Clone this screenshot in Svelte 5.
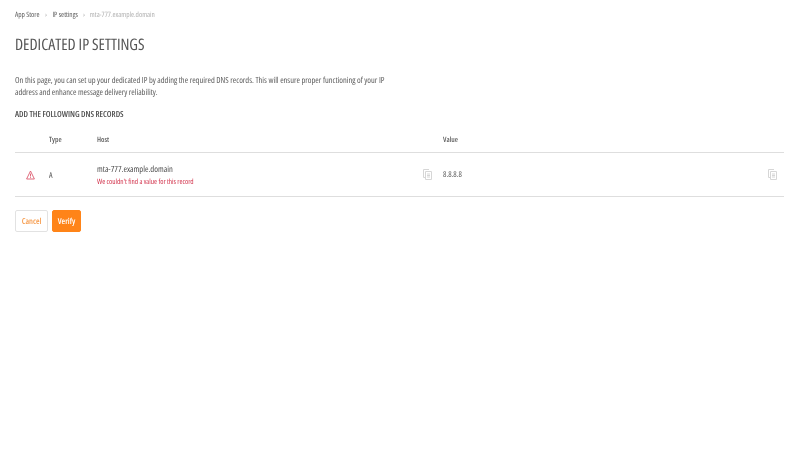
{#snippet copy()}
  <svg width="9" height="11" viewBox="0 0 9 11" fill="none" stroke="#d6d6d6" stroke-width="1">
    <path d="M6 .5H.5v8H2" />
    <path d="M2.5 2.5h6v8h-6z" />
    <path d="M4 5h3M4 6.5h3M4 8h3" />
  </svg>
{/snippet}

<main class="page">
  <nav class="crumbs">
    <span>App Store</span><span class="sep first">›</span><span>IP settings</span><span class="sep">›</span><span class="current">mta-777.example.domain</span>
  </nav>
  <h1>DEDICATED IP SETTINGS</h1>
  <p class="intro">On this page, you can set up your dedicated IP by adding the required DNS records. This will ensure proper functioning of your IP address and enhance message delivery reliability.</p>
  <h2>ADD THE FOLLOWING DNS RECORDS</h2>

  <section class="table">
    <div class="row head">
      <span></span><span>Type</span><span>Host</span><span></span><span>Value</span><span></span>
    </div>
    <div class="row body">
      <span class="alert">
        <svg width="9" height="10" viewBox="0 0 9 10" fill="none" stroke="#dd5a6e" stroke-width="0.9">
          <path d="M4.5 1 L8.4 9 H0.6 Z" stroke-linejoin="round" />
          <path d="M4.5 3.6v2.9M4.5 7.2v.9" />
        </svg>
      </span>
      <span class="type">A</span>
      <div class="host">
        <div class="name">mta-777.example.domain</div>
        <div class="error">We couldn't find a value for this record</div>
      </div>
      <span class="copy">{@render copy()}</span>
      <span class="value">8.8.8.8</span>
      <span class="copy end">{@render copy()}</span>
    </div>
  </section>

  <div class="actions">
    <button class="cancel">Cancel</button>
    <button class="verify">Verify</button>
  </div>
</main>

<style>
  :global(body) {
    margin: 0;
    background: #fff;
  }
  .page {
    font-family: "Open Sans", sans-serif;
    font-stretch: 75%;
    text-rendering: geometricPrecision;
    color: #5c5c5c;
    padding: 10px 16px 0 15px;
    height: 440px;
    overflow: hidden;
    will-change: transform;
  }
  .crumbs {
    display: flex;
    align-items: center;
    font-size: 7.3px;
    line-height: 11px;
    color: #5c5c5c;
  }
  .sep {
    margin: 0 5px;
    color: #aaa;
  }
  .sep.first {
    margin: 0 5.5px;
  }
  .current {
    color: #b0b0b0;
  }
  h1 {
    margin: 13px 0 0;
    font-size: 15.9px;
    line-height: 20px;
    font-weight: 400;
    color: #555;
  }
  .intro {
    margin: 21px 0 0;
    width: 375px;
    font-size: 8.4px;
    line-height: 12px;
    color: #5c5c5c;
  }
  h2 {
    margin: 10px 0 0;
    font-size: 8.35px;
    line-height: 11px;
    font-weight: 600;
    color: #4d4d4d;
  }
  .table {
    margin-top: 6px;
  }
  .row {
    display: grid;
    grid-template-columns: 34px 48px 326px 20px 1fr 16px;
    align-items: center;
  }
  .head {
    height: 25px;
    padding-top: 1px;
    border-bottom: 1px solid #dedede;
    font-size: 7.3px;
    font-weight: 600;
    color: #5c5c5c;
  }
  .body {
    height: 43px;
    border-bottom: 1px solid #dedede;
    font-size: 8px;
    color: #5c5c5c;
  }
  .alert {
    display: flex;
    padding-left: 11px;
  }
  .type {
    padding-top: 2px;
  }
  .host {
    padding-top: 2px;
  }
  .name {
    font-size: 8.5px;
    line-height: 12px;
    color: #4d4d4d;
  }
  .error {
    margin-top: 1px;
    font-size: 7.25px;
    line-height: 10px;
    color: #d2334c;
  }
  .copy {
    display: flex;
  }
  .copy.end {
    justify-content: flex-end;
    padding-right: 7px;
  }
  .actions {
    display: flex;
    gap: 4px;
    margin-top: 13px;
  }
  button {
    height: 22px;
    border-radius: 2px;
    font-family: inherit;
    font-stretch: inherit;
    text-rendering: inherit;
    font-size: 8.2px;
    font-weight: 600;
    padding: 0;
  }
  .cancel {
    width: 33px;
    background: #fff;
    color: #f69a4a;
    border: 1px solid #e2e2e2;
  }
  .verify {
    width: 29px;
    background: #ff8418;
    color: #fff;
    border: 1px solid #ff8418;
  }
</style>
